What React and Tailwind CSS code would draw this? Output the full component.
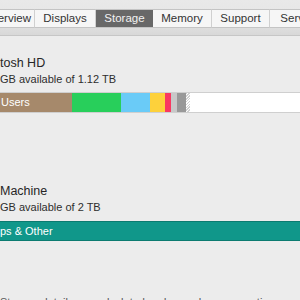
export default function App() {
  const tabs = [
    { label: "Overview", w: "w-[55px]" },
    { label: "Displays", w: "w-[61px]" },
    { label: "Storage", w: "w-[57px]", active: true },
    { label: "Memory", w: "w-[59px]" },
    { label: "Support", w: "w-[58px]" },
    { label: "Service", w: "w-[60px]" },
  ];
  return (
    <div
      className="w-[300px] h-[300px] overflow-hidden bg-[#ececec] text-[#262626]"
      style={{ fontFamily: '"Liberation Sans", Arial, sans-serif' }}
    >
      <div className="h-[36px] bg-gradient-to-b from-[#e9e9e9] via-[#e6e6e6] to-[#d8d8d8] border-b border-[#c6c6c6] pt-[9px]">
        <div className="flex ml-[-20px] h-[19px]">
          {tabs.map((t) => (
            <div
              key={t.label}
              className={
                "shrink-0 flex items-center justify-center text-[11.5px] leading-none border-y border-[#c4c4c4] " +
                t.w +
                " " +
                (t.active
                  ? "bg-[#686868] text-[#f2f2f2] border-[#5a5a5a]"
                  : "bg-[#f6f6f6] text-[#333] border-r border-r-[#d0d0d0]")
              }
            >
              {t.label}
            </div>
          ))}
        </div>
      </div>

      <div className="flex flex-col">
        <div className="mt-[19px] text-[12.5px] leading-[16px]">tosh HD</div>
        <div className="mt-[1px] text-[11px] leading-[14px] text-[#2e2e2e]">GB available of 1.12 TB</div>
        <div className="mt-[6px] h-[21px] flex border-y border-[#cfcfcf] bg-white">
          <div className="w-[72px] bg-[#a6896b] text-white text-[11px] flex items-center pl-[1px]">Users</div>
          <div className="w-[49px] bg-[#28cf5b]" />
          <div className="w-[29px] bg-[#6acbf7]" />
          <div className="w-[15px] bg-[#fdd13b]" />
          <div className="w-[6px] bg-[#f93861]" />
          <div className="w-[6px] bg-[#c8c8c8]" />
          <div className="w-[9px] bg-[#999999]" />
          <div className="w-[4px] bg-[repeating-linear-gradient(135deg,#d0d0d0_0px,#d0d0d0_1px,#ffffff_1px,#ffffff_2px)]" />
          <div className="flex-1 bg-white" />
        </div>

        <div className="mt-[70px] text-[12.5px] leading-[16px]">Machine</div>
        <div className="mt-[1px] text-[11px] leading-[14px] text-[#2e2e2e]">GB available of 2 TB</div>
        <div className="mt-[7px] h-[20px] flex items-center bg-[#10978a] border-y border-[#0b7b70] text-white text-[11px]">
          ps &amp; Other
        </div>

        <div className="mt-[54px] text-[11px] leading-[14px] text-[#555] whitespace-nowrap">
          Storage details are calculated and may change over time.
        </div>
      </div>
    </div>
  );
}
